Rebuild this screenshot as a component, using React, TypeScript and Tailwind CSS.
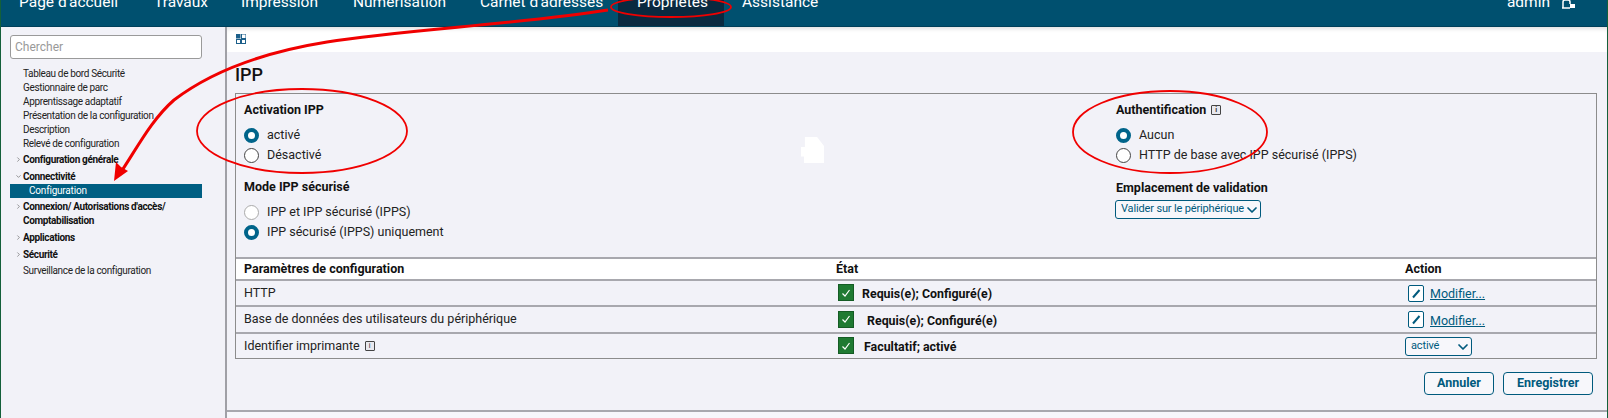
import React from 'react';
import { ChevronDown, ChevronRight } from 'lucide-react';

const teal = 'text-[#005a7d]';

const navTabs = [
  { label: 'Page d\'accueil', cls: 'w-[135px]' },
  { label: 'Travaux', cls: 'w-[87px]' },
  { label: 'Impression', cls: 'w-[112px]' },
  { label: 'Numérisation', cls: 'w-[127px]' },
  { label: 'Carnet d\'adresses', cls: 'w-[138px]' },
  { label: 'Propriétés', cls: 'w-[106px] pl-[19px] bg-[#0a2a40]' },
  { label: 'Assistance', cls: 'pl-[18px]' },
];

const InfoIcon = () => (
  <span className="inline-flex w-[10px] h-[10px] items-center justify-center border border-[#444] rounded-[1px] bg-[#e8e8ee] text-[7px] leading-none text-[#333]">i</span>
);

const Radio = ({ name, label, checked = false, disabled = false }: { name: string; label: string; checked?: boolean; disabled?: boolean }) => (
  <label className="flex items-center h-[20px]">
    <input
      type="radio"
      name={name}
      defaultChecked={checked}
      className={`appearance-none w-[15px] h-[15px] rounded-full bg-white border ${disabled ? 'border-[#aaa]' : 'border-[#444]'} checked:border-[4px] checked:border-[#00648a]`}
    />
    <span className="ml-[8px] text-[12.5px] text-[#222]">{label}</span>
  </label>
);

const CheckBadge = () => (
  <span className="w-[16px] h-[17px] bg-[#1f7a32] border border-[#155c25] flex items-center justify-center shrink-0">
    <svg width="10" height="10" viewBox="0 0 10 10" fill="none" stroke="#fff" strokeWidth="1.2">
      <path d="M1.5 5.5 L4 8 L8.5 2" />
    </svg>
  </span>
);

const EditIcon = () => (
  <span className="w-[16px] h-[17px] border-[1.5px] border-[#005a7d] rounded-[2px] bg-white flex items-center justify-center shrink-0">
    <svg width="11" height="11" viewBox="0 0 11 11" fill="none" stroke="#005a7d" strokeWidth="2">
      <path d="M2 9.5 L8.5 2" />
    </svg>
  </span>
);

const Modifier = () => (
  <div className="flex items-center">
    <EditIcon />
    <a className={`ml-[6px] mt-[3px] text-[12.5px] underline ${teal}`}>Modifier...</a>
  </div>
);

const Status = ({ text, gap }: { text: string; gap: string }) => (
  <div className="flex items-center">
    <CheckBadge />
    <span className={`${gap} mt-[3px] text-[12.4px] font-bold text-[#111]`}>{text}</span>
  </div>
);

const SelectBox = ({ value, width }: { value: string; width: string }) => (
  <div className={`relative h-[19px] ${width}`}>
    <select className={`block w-full h-full appearance-none pl-[5px] border border-[#005a7d] rounded-[3px] bg-[#f7f7fb] text-[11px] tracking-[-0.15px] ${teal}`}>
      <option>{value}</option>
    </select>
    <ChevronDown size={16} strokeWidth={2.6} className="absolute right-[1px] top-[2px] text-[#005a7d] pointer-events-none" />
  </div>
);

const SideLink = ({ label }: { label: string }) => (
  <div className="h-[14px] pl-[22px] text-[10px] tracking-[-0.35px] leading-[14px] text-[#222] whitespace-nowrap">{label}</div>
);

const SideGroup = ({ lines, open = false, mt }: { lines: string[]; open?: boolean; mt: string }) => (
  <div className={`${mt} relative pl-[22px] text-[10px] tracking-[-0.35px] leading-[14px] font-bold text-[#111] whitespace-nowrap`}>
    <span className="absolute left-[14px] top-[3px] text-[#555]">
      {open ? <ChevronDown size={7} /> : <ChevronRight size={7} />}
    </span>
    {lines.map(l => <div key={l}>{l}</div>)}
  </div>
);

export default function App() {
  return (
    <div className="relative w-[1608px] h-[418px] overflow-hidden bg-[#f2f2f8] border-x border-[#14603a] flex flex-col font-['Roboto',sans-serif]">
      {/* top bar, page is scrolled so the labels are cut off */}
      <header className="h-[27px] shrink-0 bg-[#00506f] border-b border-[#00405a] overflow-hidden flex justify-between text-white text-[15.5px] leading-[16px] font-normal">
        <nav className="flex pl-[18px]">
          {navTabs.map(tab => (
            <div key={tab.label} className={`h-[27px] ${tab.cls}`}>
              <div className="-mt-[6px] whitespace-nowrap">{tab.label}</div>
            </div>
          ))}
        </nav>
        <div className="flex pr-[31px]">
          <div className="-mt-[6px]">admin</div>
          <svg className="ml-[11px]" width="15" height="9" viewBox="0 0 15 9" fill="none" stroke="#fff" strokeWidth="1.5">
            <path d="M2 8 V2 Q2 0 4 0 H7 Q9 0 9 2 V4" />
            <rect x="9" y="4" width="5" height="4" fill="#fff" stroke="none" />
            <path d="M1 8 H9" />
          </svg>
        </div>
      </header>

      <div className="flex flex-1 min-h-0">
        <aside className="w-[226px] shrink-0 border-r-2 border-[#a0a0a6] pt-[8px]">
          <input
            placeholder="Chercher"
            className="block ml-[9px] w-[192px] h-[24px] px-[4px] bg-white border border-[#9a9a9a] rounded-[3px] text-[12px] placeholder:text-[#999]"
          />
          <div className="mt-[8px]">
            <SideLink label="Tableau de bord Sécurité" />
            <SideLink label="Gestionnaire de parc" />
            <SideLink label="Apprentissage adaptatif" />
            <SideLink label="Présentation de la configuration" />
            <SideLink label="Description" />
            <SideLink label="Relevé de configuration" />
            <SideGroup lines={['Configuration générale']} mt="mt-[2px]" />
            <SideGroup lines={['Connectivité']} open mt="mt-[3px]" />
            <div className="ml-[9px] w-[192px] h-[14px] bg-[#005f83] pl-[19px] text-[10px] tracking-[-0.2px] leading-[14px] text-white">Configuration</div>
            <SideGroup lines={['Connexion/ Autorisations d\'accès/', 'Comptabilisation']} mt="mt-[2px]" />
            <SideGroup lines={['Applications']} mt="mt-[3px]" />
            <SideGroup lines={['Sécurité']} mt="mt-[3px]" />
            <div className="mt-[2px]"><SideLink label="Surveillance de la configuration" /></div>
          </div>
        </aside>

        <main className="flex-1 min-w-0 flex flex-col">
          <div className="h-[25px] shrink-0 bg-white shadow-[inset_0_4px_4px_-2px_rgba(0,0,0,0.12)] pl-[9px] pt-[7px]">
            <svg width="10" height="10" viewBox="0 0 10 10" fill="#1c5f8a">
              <rect x="0" y="0" width="4.5" height="4.5" />
              <rect x="5.5" y="0" width="4.5" height="4.5" fill="none" stroke="#1c5f8a" strokeWidth="1" />
              <rect x="0.5" y="5.5" width="4" height="4" fill="none" stroke="#1c5f8a" strokeWidth="1" />
              <rect x="5.5" y="5.5" width="4" height="4" fill="none" stroke="#1c5f8a" strokeWidth="1" />
            </svg>
          </div>

          <div className="flex-1 min-h-0 pl-[8px] pr-[10px]">
            <h1 className="mt-[11px] text-[18px] leading-[24px] font-medium text-[#111]">IPP</h1>

            <section className="mt-[6px] border border-[#8c8c8c]">
              <div className="grid grid-cols-[872px_1fr] pl-[8px] pt-[8px] h-[163px]">
                <div>
                  <h2 className="text-[12.5px] leading-[16px] font-bold text-[#111]">Activation IPP</h2>
                  <div className="mt-[7px]">
                    <Radio name="ipp" label="activé" checked />
                    <Radio name="ipp" label="Désactivé" />
                  </div>
                  <h2 className="mt-[14px] text-[12.5px] leading-[16px] font-bold text-[#111]">Mode IPP sécurisé</h2>
                  <div className="mt-[7px]">
                    <Radio name="mode" label="IPP et IPP sécurisé (IPPS)" disabled />
                    <Radio name="mode" label="IPP sécurisé (IPPS) uniquement" checked />
                  </div>
                </div>
                <div>
                  <h2 className="flex items-center gap-[5px] text-[12.5px] leading-[16px] font-bold text-[#111]">
                    Authentification <InfoIcon />
                  </h2>
                  <div className="mt-[7px]">
                    <Radio name="auth" label="Aucun" checked />
                    <Radio name="auth" label="HTTP de base avec IPP sécurisé (IPPS)" />
                  </div>
                  <h2 className="mt-[15px] text-[12.5px] leading-[16px] font-bold text-[#111]">Emplacement de validation</h2>
                  <div className="mt-[4px] -ml-[1px]">
                    <SelectBox value="Valider sur le périphérique" width="w-[146px]" />
                  </div>
                </div>
              </div>

              <table className="w-full table-fixed text-[12.5px] text-[#222] border-t-2 border-[#a8a8ae]">
                <colgroup>
                  <col className="w-[599px]" />
                  <col className="w-[570px]" />
                  <col />
                </colgroup>
                <thead>
                  <tr className="h-[22px] bg-white border-b-2 border-[#a8a8ae] text-left">
                    <th className="pl-[8px] font-bold text-[#111]">Paramètres de configuration</th>
                    <th className="pl-[1px] font-bold text-[#111]">État</th>
                    <th className="pl-0 font-bold text-[#111]">Action</th>
                  </tr>
                </thead>
                <tbody>
                  <tr className="h-[26px] border-b-2 border-[#a8a8ae]">
                    <td className="pl-[8px]">HTTP</td>
                    <td className="pl-[3px]"><Status text="Requis(e); Configuré(e)" gap="ml-[8px]" /></td>
                    <td className="pl-[3px]"><Modifier /></td>
                  </tr>
                  <tr className="h-[27px] border-b-2 border-[#a8a8ae]">
                    <td className="pl-[8px]">Base de données des utilisateurs du périphérique</td>
                    <td className="pl-[3px]"><Status text="Requis(e); Configuré(e)" gap="ml-[13px]" /></td>
                    <td className="pl-[3px]"><Modifier /></td>
                  </tr>
                  <tr className="h-[25px]">
                    <td className="pl-[8px]">
                      <span className="inline-flex items-center gap-[5px]">Identifier imprimante <InfoIcon /></span>
                    </td>
                    <td className="pl-[3px]"><Status text="Facultatif; activé" gap="ml-[10px]" /></td>
                    <td>
                      <SelectBox value="activé" width="w-[67px]" />
                    </td>
                  </tr>
                </tbody>
              </table>
            </section>

            <div className="mt-[13px] flex justify-end gap-[9px] pr-[4px]">
              <button className={`w-[70px] h-[23px] border border-[#005a7d] rounded-[4px] bg-[#f7f7fb] text-[12.5px] font-bold ${teal}`}>Annuler</button>
              <button className={`w-[90px] h-[23px] border border-[#005a7d] rounded-[4px] bg-[#f7f7fb] text-[12.5px] font-bold ${teal}`}>Enregistrer</button>
            </div>
          </div>

          <div className="h-[8px] shrink-0 border-t-2 border-[#a8a8ae] bg-[#f7f7fb]" />
        </main>
      </div>

      {/* small white blotch left in the screenshot */}
      <div className="absolute left-[800px] top-[137px] w-[23px] h-[26px] bg-white [clip-path:polygon(17%_0,70%_0,100%_35%,100%_100%,13%_100%,13%_75%,0_75%,0_38%,17%_38%)]" />

      {/* red hand drawn annotations on top of the page */}
      <svg className="absolute left-0 top-0 pointer-events-none" width="1608" height="418" fill="none" stroke="#f00000">
        <ellipse cx="670" cy="7" rx="60" ry="10" strokeWidth="1.8" />
        <ellipse cx="301" cy="131" rx="105" ry="42" strokeWidth="1.8" />
        <ellipse cx="1169" cy="132" rx="97" ry="41" strokeWidth="1.8" />
        <path d="M607 10 C520 24 400 30 326 42 C270 51 215 68 173 100 C150 120 135 150 118 175" strokeWidth="3" />
        <path d="M113 181 L115 162 L120 167 L127 171 Z" fill="#f00000" stroke="none" />
      </svg>
    </div>
  );
}
